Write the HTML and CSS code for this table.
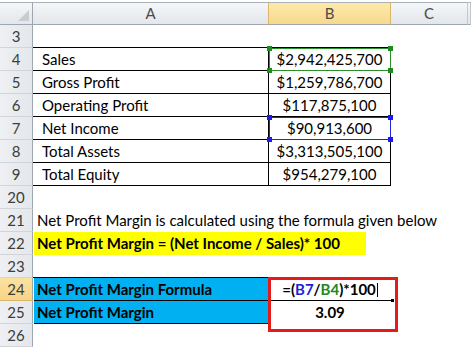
FILE: index.html
```html
<!DOCTYPE html>
<html>
<head>
<meta charset="utf-8">
<link rel="stylesheet" href="styles.css">
</head>
<body>
<div class="sheet">
  <div class="row hdr">
    <div class="h corner"><span class="tri"></span></div>
    <div class="h">A</div>
    <div class="h on">B</div>
    <div class="h">C</div>
    <div class="h"></div>
  </div>
  <div class="row"><div class="rh">3</div><div class="c bb"></div><div class="c bb"></div><div class="c"></div><div class="c"></div></div>
  <div class="row"><div class="rh">4</div><div class="c tl">Sales</div><div class="c tv">$2,942,425,700<div class="sel green"><i class="k1"></i><i class="k2"></i><i class="k3"></i><i class="k4"></i></div></div><div class="c"></div><div class="c"></div></div>
  <div class="row"><div class="rh">5</div><div class="c tl">Gross Profit</div><div class="c tv">$1,259,786,700</div><div class="c"></div><div class="c"></div></div>
  <div class="row"><div class="rh">6</div><div class="c tl">Operating Profit</div><div class="c tv">$117,875,100</div><div class="c"></div><div class="c"></div></div>
  <div class="row"><div class="rh">7</div><div class="c tl">Net Income</div><div class="c tv">$90,913,600<div class="sel blue"><i class="k1"></i><i class="k2"></i><i class="k3"></i><i class="k4"></i></div></div><div class="c"></div><div class="c"></div></div>
  <div class="row"><div class="rh">8</div><div class="c tl">Total Assets</div><div class="c tv">$3,313,505,100</div><div class="c"></div><div class="c"></div></div>
  <div class="row"><div class="rh">9</div><div class="c tl">Total Equity</div><div class="c tv">$954,279,100</div><div class="c"></div><div class="c"></div></div>
  <div class="row"><div class="rh">20</div><div class="c"></div><div class="c"></div><div class="c"></div><div class="c"></div></div>
  <div class="row"><div class="rh">21</div><div class="c txt">Net Profit Margin is calculated using the formula given below</div><div class="c"></div><div class="c"></div><div class="c"></div></div>
  <div class="row"><div class="rh">22</div><div class="c txt"><div class="hl">Net Profit Margin = (Net Income / Sales)* 100</div></div><div class="c"></div><div class="c"></div><div class="c"></div></div>
  <div class="row"><div class="rh">23</div><div class="c bb"></div><div class="c bb"></div><div class="c"></div><div class="c"></div></div>
  <div class="row"><div class="rh on">24</div><div class="c txt blu">Net Profit Margin Formula</div><div class="c val bb active"><span class="f">=(<span class="rb">B7</span>/<span class="rg">B4</span>)*100</span><span class="caret"></span></div><div class="c"></div><div class="c"></div></div>
  <div class="row"><div class="rh">25</div><div class="c txt blu">Net Profit Margin</div><div class="c val">3.09</div><div class="c"></div><div class="c"></div></div>
  <div class="row"><div class="rh">26</div><div class="c"></div><div class="c"></div><div class="c"></div><div class="c"></div></div>
</div>
</body>
</html>
```

FILE: styles.css
```css
* { box-sizing: border-box; }
body {
  margin: 0;
  background: #fff;
  font-family: Lato, "Open Sans", sans-serif;
  font-size: 15px;
  color: #000;
  overflow: hidden;
}
.sheet { padding-top: 2px; }
.row {
  display: grid;
  grid-template-columns: 33px 236px 122px 77px 1fr;
  height: 23px;
}
.h {
  background: linear-gradient(#f4f6f8, #e3e6ea);
  border-top: 1px solid #aab1b9;
  border-right: 1px solid #c3c8ce;
  border-bottom: 1px solid #9ea6b0;
  text-align: center;
  line-height: 21px;
  color: #4a4a4a;
  font-size: 15px;
}
.h.on {
  background: linear-gradient(#fdeaa8, #f8d88f);
  border-right-color: #d9b66a;
  border-left: 1px solid #d9b66a;
  margin-left: -1px;
}
.corner { position: relative; border-right-color: #9ea6b0; }
.tri {
  position: absolute;
  right: 3px;
  bottom: 3px;
  width: 0;
  height: 0;
  border-left: 11px solid transparent;
  border-bottom: 11px solid #c9ccd0;
}
.rh {
  background: linear-gradient(90deg, #eef0f3, #e4e7eb);
  border-right: 1px solid #9ea6b0;
  border-bottom: 1px solid #d1d5da;
  text-align: center;
  line-height: 22px;
  color: #3d3d3d;
}
.rh.on { background: linear-gradient(#fbe2a0, #f7d487); border-bottom-color: #d9b66a; }
.c {
  white-space: nowrap;
  line-height: 22px;
  padding: 0 4px;
  position: relative;
}
.bb { border-bottom: 1px solid #000; }
.tl {
  padding-left: 9px;
  border-right: 1px solid #000;
  border-bottom: 1px solid #000;
}
.tv {
  text-align: center;
  border-right: 1px solid #000;
  border-bottom: 1px solid #000;
}
.txt { padding-left: 4px; overflow: visible; z-index: 1; }
.hl {
  width: 332px;
  margin-left: -3px;
  padding-left: 3px;
  height: 23px;
  background: #ffff00;
  font-weight: bold;
}
.blu {
  background: #00b0f0;
  font-weight: bold;
  border-bottom: 1px solid #000;
  margin-left: 1px;
  padding-left: 3px;
}
.val { text-align: center; font-weight: bold; }
.rb { color: #1f1fd6; }
.rg { color: #1d8a1d; }
.caret {
  display: inline-block;
  width: 1px;
  height: 14px;
  background: #000;
  vertical-align: -2px;
  margin-left: 1px;
}
.active::after {
  content: "";
  position: absolute;
  left: -1px;
  top: -1px;
  width: 124px;
  height: 49px;
  border: 3px solid #e31b1b;
  z-index: 3;
}
.active::before {
  content: "";
  position: absolute;
  right: -3px;
  bottom: -2px;
  width: 3px;
  height: 3px;
  background: #000;
  z-index: 4;
}
.sel {
  position: absolute;
  left: 0;
  top: 0;
  width: 122px;
  height: 23px;
  border: 1px solid;
  z-index: 2;
}
.green { border-color: #2b8f2b; color: #1f8a1f; }
.blue { border-color: #2323e0; color: #1a1af0; }
.sel i {
  position: absolute;
  width: 5px;
  height: 5px;
  background: currentColor;
}
.k1 { left: -3px; top: -3px; }
.k2 { right: -3px; top: -3px; }
.k3 { left: -3px; bottom: -3px; }
.k4 { right: -3px; bottom: -3px; }
```
